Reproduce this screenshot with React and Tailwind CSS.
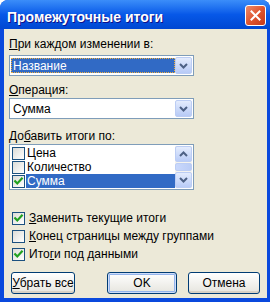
import React from "react";

function CheckMark() {
  return (
    <svg width="11" height="11" viewBox="0 0 11 11" className="block">
      <path d="M2.2 5.2 L4.3 7.4 L8.8 2.6" fill="none" stroke="#21A121" strokeWidth="2.2" strokeLinecap="square" />
    </svg>
  );
}

function Box({ checked }) {
  return (
    <span className="flex h-[13px] w-[13px] shrink-0 items-center justify-center border border-[#1C5180] bg-linear-to-br from-[#DCDCD7] to-white">
      {checked && <CheckMark />}
    </span>
  );
}

function Chevron({ up }) {
  return (
    <svg width="9" height="6" viewBox="0 0 9 6" className="block">
      <path d={up ? "M1 5 L4.5 1.5 L8 5" : "M1 1 L4.5 4.5 L8 1"} fill="none" stroke="#4D6185" strokeWidth="2" />
    </svg>
  );
}

function ArrowBtn({ up, h }) {
  return (
    <div className={`flex ${h} w-[17px] items-center justify-center rounded-[2px] border border-[#BCCDF4] bg-linear-to-b from-[#E4ECFD] to-[#B9CCF7]`}>
      <Chevron up={up} />
    </div>
  );
}

function Select({ children }) {
  return (
    <div className="flex h-[21px] w-[185px] items-center border border-[#7F9DB9] bg-white">
      <div className="flex h-full flex-1 items-center pl-[1px]">{children}</div>
      <div className="mr-[1px] flex h-[17px] w-[17px] items-center justify-center rounded-[2px] border border-[#BCCDF4] bg-linear-to-b from-[#E4ECFD] to-[#B7CAF6]">
        <Chevron />
      </div>
    </div>
  );
}

function Row({ checked, selected, children }) {
  return (
    <div className="flex h-[14px] items-center pl-[2px]">
      <Box checked={checked} />
      <div className={`ml-[1px] flex h-[14px] flex-1 items-center pl-[1px] ${selected ? "bg-[#316AC5] text-white" : ""}`}>{children}</div>
    </div>
  );
}

function CheckLine({ checked, children }) {
  return (
    <div className="flex h-[13px] items-center pl-[3px]">
      <Box checked={checked} />
      <span className="ml-[4px] leading-[13px]">{children}</span>
    </div>
  );
}

export default function App() {
  return (
    <div className="flex h-[302px] w-[270px] flex-col overflow-hidden rounded-t-[8px] bg-[#0A49DD] font-['Liberation_Sans',Arial,sans-serif] text-[12px] text-black">
      <div className="flex h-[29px] shrink-0 items-center justify-between bg-linear-to-b from-[#3B8DF9] via-[#0758E8] to-[#0047D2] pl-[7px] pr-[4px] pt-[5px]">
        <span className="text-[14px] font-bold leading-[16px] text-white [text-shadow:1px_1px_#0F1089]">Промежуточные итоги</span>
        <div className="flex h-[21px] w-[21px] self-start items-center justify-center rounded-[3px] border border-white bg-linear-to-br from-[#EB8A6B] via-[#E0552F] to-[#C4391B]">
          <svg width="11" height="11" viewBox="0 0 11 11" className="block">
            <path d="M1.5 1.5 L9.5 9.5 M9.5 1.5 L1.5 9.5" stroke="white" strokeWidth="2" strokeLinecap="square" />
          </svg>
        </div>
      </div>
      <div className="mb-[4px] ml-[4px] mr-[3px] flex flex-1 flex-col bg-[#ECE9D8] px-[5px] pt-[9px]">
        <div className="h-[13px] leading-[13px]"><u>П</u>ри каждом изменении в:</div>
        <div className="mt-[4px]">
          <Select>
            <div className="flex h-[15px] w-full items-center border border-dotted border-[#F0B040] bg-[#316AC5] pl-[1px] text-white">Название</div>
          </Select>
        </div>
        <div className="mt-[8px] h-[13px] leading-[13px]"><u>О</u>перация:</div>
        <div className="mt-[1px]">
          <Select>
            <span className="pl-[2px]">Сумма</span>
          </Select>
        </div>
        <div className="mt-[11px] h-[13px] leading-[13px]">До<u>б</u>авить итоги по:</div>
        <div className="mt-[1px] flex h-[46px] w-[185px] border border-[#7F9DB9] bg-white py-[1px]">
          <div className="flex flex-1 flex-col">
            <Row>Цена</Row>
            <Row>Количество</Row>
            <Row checked selected>Сумма</Row>
          </div>
          <div className="mr-[1px] flex w-[17px] flex-col gap-[1px] bg-[#F4F3EE]">
            <ArrowBtn up h="h-[16px]" />
            <div className="h-[9px] w-[17px] rounded-[2px] border border-[#BCCDF4] bg-linear-to-r from-[#C9D8FC] to-[#BACCF6]" />
            <ArrowBtn h="h-[16px]" />
          </div>
        </div>
        <div className="mt-[22px] flex flex-col gap-[5px]">
          <CheckLine checked><u>З</u>аменить текущие итоги</CheckLine>
          <CheckLine><u>К</u>онец страницы между группами</CheckLine>
          <CheckLine checked>Ито<u>г</u>и под данными</CheckLine>
        </div>
        <div className="mt-[11px] flex">
          <button className="ml-[2px] h-[22px] w-[64px] rounded-[3px] border border-[#003C74] bg-linear-to-b from-white to-[#E6E5DE] shadow-[inset_0_-2px_0_#D8D2C6] text-[12px]"><u>У</u>брать все</button>
          <button className="ml-[32px] h-[22px] w-[70px] rounded-[3px] border border-[#003C74] bg-linear-to-b from-white to-[#E6E5DE] shadow-[inset_0_0_0_1px_#CEDDF9,inset_0_0_0_2px_#94B4EC] text-[12px]">OK</button>
          <button className="ml-[11px] h-[22px] w-[72px] rounded-[3px] border border-[#003C74] bg-linear-to-b from-white to-[#E6E5DE] shadow-[inset_0_-2px_0_#D8D2C6] text-[12px]">Отмена</button>
        </div>
      </div>
    </div>
  );
}
